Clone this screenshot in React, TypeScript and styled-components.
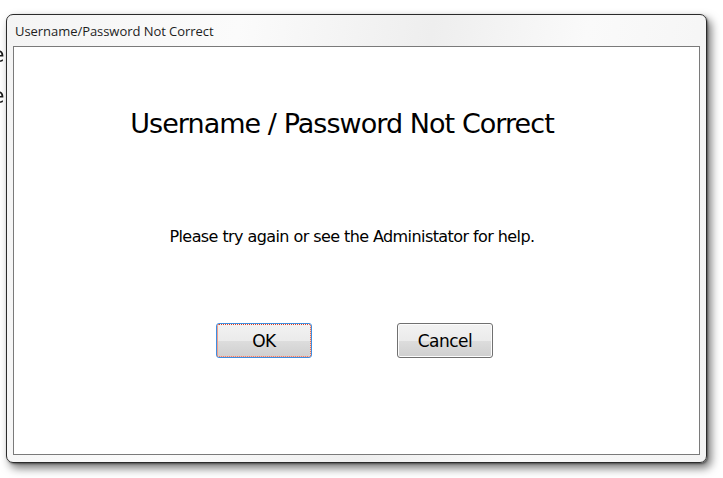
import React from "react";
import styled, { createGlobalStyle } from "styled-components";

const Global = createGlobalStyle`
  html, body { margin: 0; padding: 0; background: #ffffff; }
  body { width: 723px; height: 478px; overflow: hidden; }
`;

const Desktop = styled.div`
  position: relative;
  width: 723px;
  height: 478px;
  background: #ffffff;
  overflow: hidden;
`;

const BackText = styled.div`
  display: flex;
  flex-direction: column;
  gap: 16px;
  padding-top: 42px;
  margin-left: -9px;
  font-family: "DejaVu Sans", sans-serif;
  font-size: 22px;
  color: #1a1a1a;
  filter: blur(0.5px);
`;

const Window = styled.div`
  position: absolute;
  left: 6px;
  top: 14px;
  width: 701px;
  height: 449px;
  box-sizing: border-box;
  border: 1px solid #2b2b2b;
  border-radius: 7px;
  background: linear-gradient(100deg, #f4f4f4 0%, #fbfbfb 30%, #eeeeee 55%, #fafafa 75%, #f3f3f3 100%);
  box-shadow: 4px 5px 10px rgba(0, 0, 0, 0.55), 1px 1px 2px rgba(0,0,0,0.4);
  display: flex;
  flex-direction: column;
  padding: 0 6px 7px 6px;
`;

const TitleBar = styled.div`
  height: 31px;
  display: flex;
  align-items: center;
  padding-left: 2px;
  font-family: "Open Sans", sans-serif;
  font-size: 13px;
  letter-spacing: -0.05px;
  color: #1e1e1e;
`;

const Panel = styled.div`
  flex: 1;
  background: #ffffff;
  border: 1px solid #7a7a7a;
  display: flex;
  flex-direction: column;
  align-items: center;
`;

const Heading = styled.div`
  margin-top: 61px;
  font-family: "DejaVu Sans", sans-serif;
  font-size: 27px;
  letter-spacing: -0.95px;
  color: #000;
  margin-left: -29px;
`;

const Message = styled.div`
  margin-top: 88px;
  font-family: "DejaVu Sans", sans-serif;
  font-size: 16px;
  letter-spacing: -0.58px;
  color: #000;
  margin-left: -9px;
`;

const ButtonRow = styled.div`
  margin-top: 77px;
  display: flex;
  gap: 85px;
  margin-left: -4px;
`;

const Button = styled.button<{ $focused?: boolean }>`
  position: relative;
  width: 96px;
  height: 35px;
  box-sizing: border-box;
  border: 1px solid ${(p) => (p.$focused ? "#3d8ee0" : "#707070")};
  border-radius: 3px;
  background: linear-gradient(#f2f2f2 0%, #ebebeb 50%, #dddddd 51%, #cfcfcf 100%);
  box-shadow: inset 0 0 0 1px #fcfcfc;
  font-family: "DejaVu Sans", sans-serif;
  font-size: 17px;
  letter-spacing: -0.5px;
  color: #000;
  padding: 0;
  display: flex;
  align-items: center;
  justify-content: center;
  outline: none;
  &::after {
    content: "";
    display: ${(p) => (p.$focused ? "block" : "none")};
    position: absolute;
    inset: 0px;
    border: 1px dotted #e0401f;
    border-radius: 2px;
  }
`;

export default function App() {
  return (
    <Desktop>
      <Global />
      <BackText>
        <span>e</span>
        <span>e</span>
      </BackText>
      <Window>
        <TitleBar>Username/Password Not Correct</TitleBar>
        <Panel>
          <Heading>Username / Password Not Correct</Heading>
          <Message>Please try again or see the Administator for help.</Message>
          <ButtonRow>
            <Button $focused>OK</Button>
            <Button>Cancel</Button>
          </ButtonRow>
        </Panel>
      </Window>
    </Desktop>
  );
}
